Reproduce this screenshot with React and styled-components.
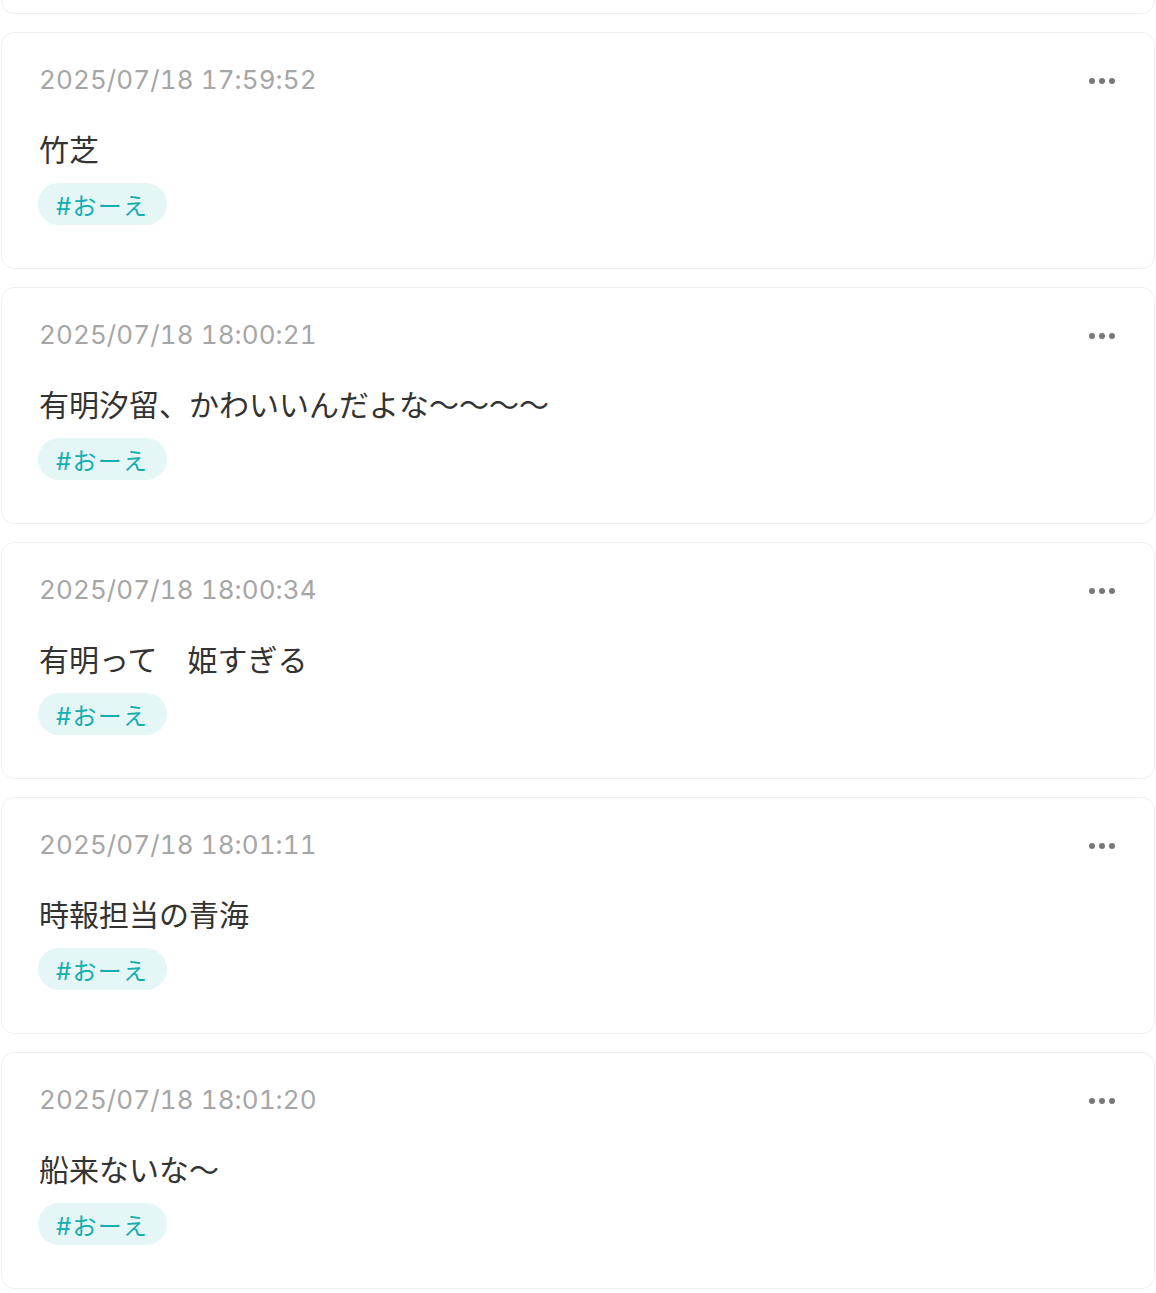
import React from "react";
import styled, { createGlobalStyle } from "styled-components";

const GlobalStyle = createGlobalStyle`
  html, body {
    margin: 0;
    padding: 0;
    background: #ffffff;
  }
  body {
    font-family: Inter, "Noto Sans CJK JP", sans-serif;
    color: #333333;
  }
`;

const List = styled.div`
  display: flex;
  flex-direction: column;
  gap: 18px;
  padding: 0 1px;
  margin-top: -223px;
`;

const Card = styled.article`
  box-sizing: border-box;
  height: 237px;
  background: #ffffff;
  border: 1px solid #efefef;
  border-radius: 13px;
  padding: 27px 38px 43px 36px;
  display: flex;
  flex-direction: column;
  align-items: flex-start;
`;

const Header = styled.div`
  align-self: stretch;
  display: flex;
  align-items: center;
  justify-content: space-between;
  height: 40px;
`;

const Time = styled.time`
  font-family: Inter, "Noto Sans CJK JP", sans-serif;
  font-size: 26px;
  font-variant-numeric: tabular-nums;
  letter-spacing: 0.1px;
  color: #a6a6a6;
  line-height: 40px;
  margin-left: 1px;
`;

const MoreButton = styled.button`
  border: none;
  background: transparent;
  padding: 0;
  width: 30px;
  height: 30px;
  display: flex;
  align-items: center;
  justify-content: center;
  gap: 4px;
  margin-right: -1px;
  margin-top: 1px;
  cursor: pointer;
`;

const Dot = styled.span`
  width: 6px;
  height: 6px;
  border-radius: 50%;
  background: #777777;
`;

const Body = styled.p`
  margin: 27px 0 0 1px;
  font-family: "Noto Sans CJK JP", sans-serif;
  font-size: 30px;
  line-height: 42px;
  color: #333333;
  white-space: pre;
`;

const Tag = styled.span`
  margin-top: 14px;
  height: 42px;
  box-sizing: border-box;
  display: inline-flex;
  align-items: center;
  padding: 0 19px 0 18px;
  border-radius: 21px;
  background: #e4f6f6;
  color: #14adb0;
  font-family: Inter, "Noto Sans CJK JP", sans-serif;
  font-size: 24px;
  letter-spacing: 1.3px;
`;

const posts = [
  { time: "2025/07/18 17:59:40", text: "竹芝", tag: "#おーえ" },
  { time: "2025/07/18 17:59:52", text: "竹芝", tag: "#おーえ" },
  { time: "2025/07/18 18:00:21", text: "有明汐留、かわいいんだよな〜〜〜〜", tag: "#おーえ" },
  { time: "2025/07/18 18:00:34", text: "有明って　姫すぎる", tag: "#おーえ" },
  { time: "2025/07/18 18:01:11", text: "時報担当の青海", tag: "#おーえ" },
  { time: "2025/07/18 18:01:20", text: "船来ないな〜", tag: "#おーえ" },
];

export default function App() {
  return (
    <>
      <GlobalStyle />
      <List>
        {posts.map((p, i) => (
          <Card key={i}>
            <Header>
              <Time>{p.time}</Time>
              <MoreButton aria-label="more">
                <Dot />
                <Dot />
                <Dot />
              </MoreButton>
            </Header>
            <Body>{p.text}</Body>
            <Tag>{p.tag}</Tag>
          </Card>
        ))}
      </List>
    </>
  );
}
